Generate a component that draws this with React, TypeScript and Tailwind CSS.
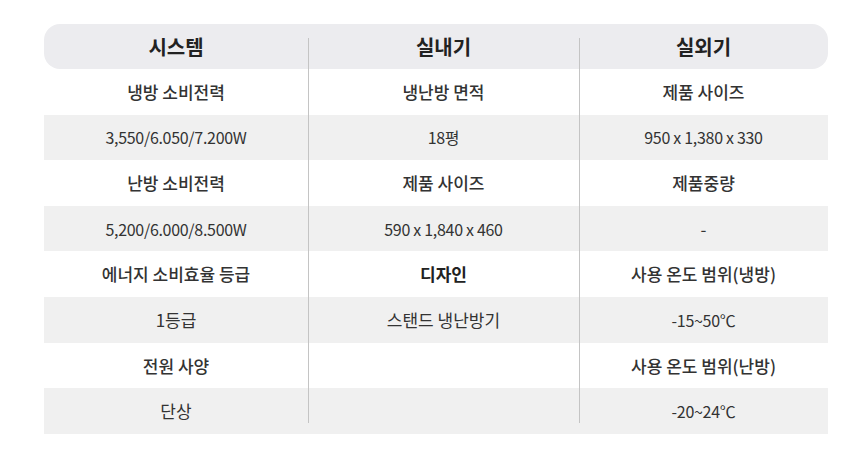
import React from 'react';

type Cell = { text: string; bold?: boolean };

const rows: { label: boolean; cells: Cell[] }[] = [
  { label: true, cells: [{ text: '냉방 소비전력' }, { text: '냉난방 면적' }, { text: '제품 사이즈' }] },
  { label: false, cells: [{ text: '3,550/6.050/7.200W' }, { text: '18평' }, { text: '950 x 1,380 x 330' }] },
  { label: true, cells: [{ text: '난방 소비전력' }, { text: '제품 사이즈' }, { text: '제품중량' }] },
  { label: false, cells: [{ text: '5,200/6.000/8.500W' }, { text: '590 x 1,840 x 460' }, { text: '-' }] },
  { label: true, cells: [{ text: '에너지 소비효율 등급' }, { text: '디자인', bold: true }, { text: '사용 온도 범위(냉방)' }] },
  { label: false, cells: [{ text: '1등급' }, { text: '스탠드 냉난방기' }, { text: '-15~50℃' }] },
  { label: true, cells: [{ text: '전원 사양' }, { text: '' }, { text: '사용 온도 범위(난방)' }] },
  { label: false, cells: [{ text: '단상' }, { text: '' }, { text: '-20~24℃' }] },
];

const cols = 'grid grid-cols-[264px_271px_249px]';

// digit-heavy values read narrower in the original, tighten them
const isNumeric = (s: string) => /\d{2}/.test(s);

export default function App() {
  return (
    <div
      className="w-[860px] h-[450px] bg-white pt-[24px] pl-[44px]"
      style={{ fontFamily: '"Noto Sans CJK KR", "Noto Sans", sans-serif' }}
    >
      <div className="relative w-[784px]">
        {/* column dividers */}
        <div className="absolute left-[264px] top-[14px] bottom-[11px] w-px bg-[#c4c4c4]" />
        <div className="absolute left-[535px] top-[14px] bottom-[11px] w-px bg-[#c4c4c4]" />

        <div className={`${cols} h-[45px] items-center rounded-2xl bg-[#ececef] text-[20px] font-bold text-[#222]`}>
          <div className="text-center">시스템</div>
          <div className="text-center">실내기</div>
          <div className="text-center">실외기</div>
        </div>

        {rows.map((row, i) => (
          <div
            key={i}
            className={`${cols} h-[45.6px] items-center text-[17px] text-[#333] ${
              row.label ? 'bg-white font-medium' : 'bg-[#f0f0f0] font-normal'
            }`}
          >
            {row.cells.map((c, j) => (
              <div
                key={j}
                className={`text-center ${c.bold ? 'font-bold text-[#222]' : ''} ${
                  isNumeric(c.text) ? 'text-[16px] tracking-[-0.3px]' : ''
                }`}
              >
                {c.text}
              </div>
            ))}
          </div>
        ))}
      </div>
    </div>
  );
}
